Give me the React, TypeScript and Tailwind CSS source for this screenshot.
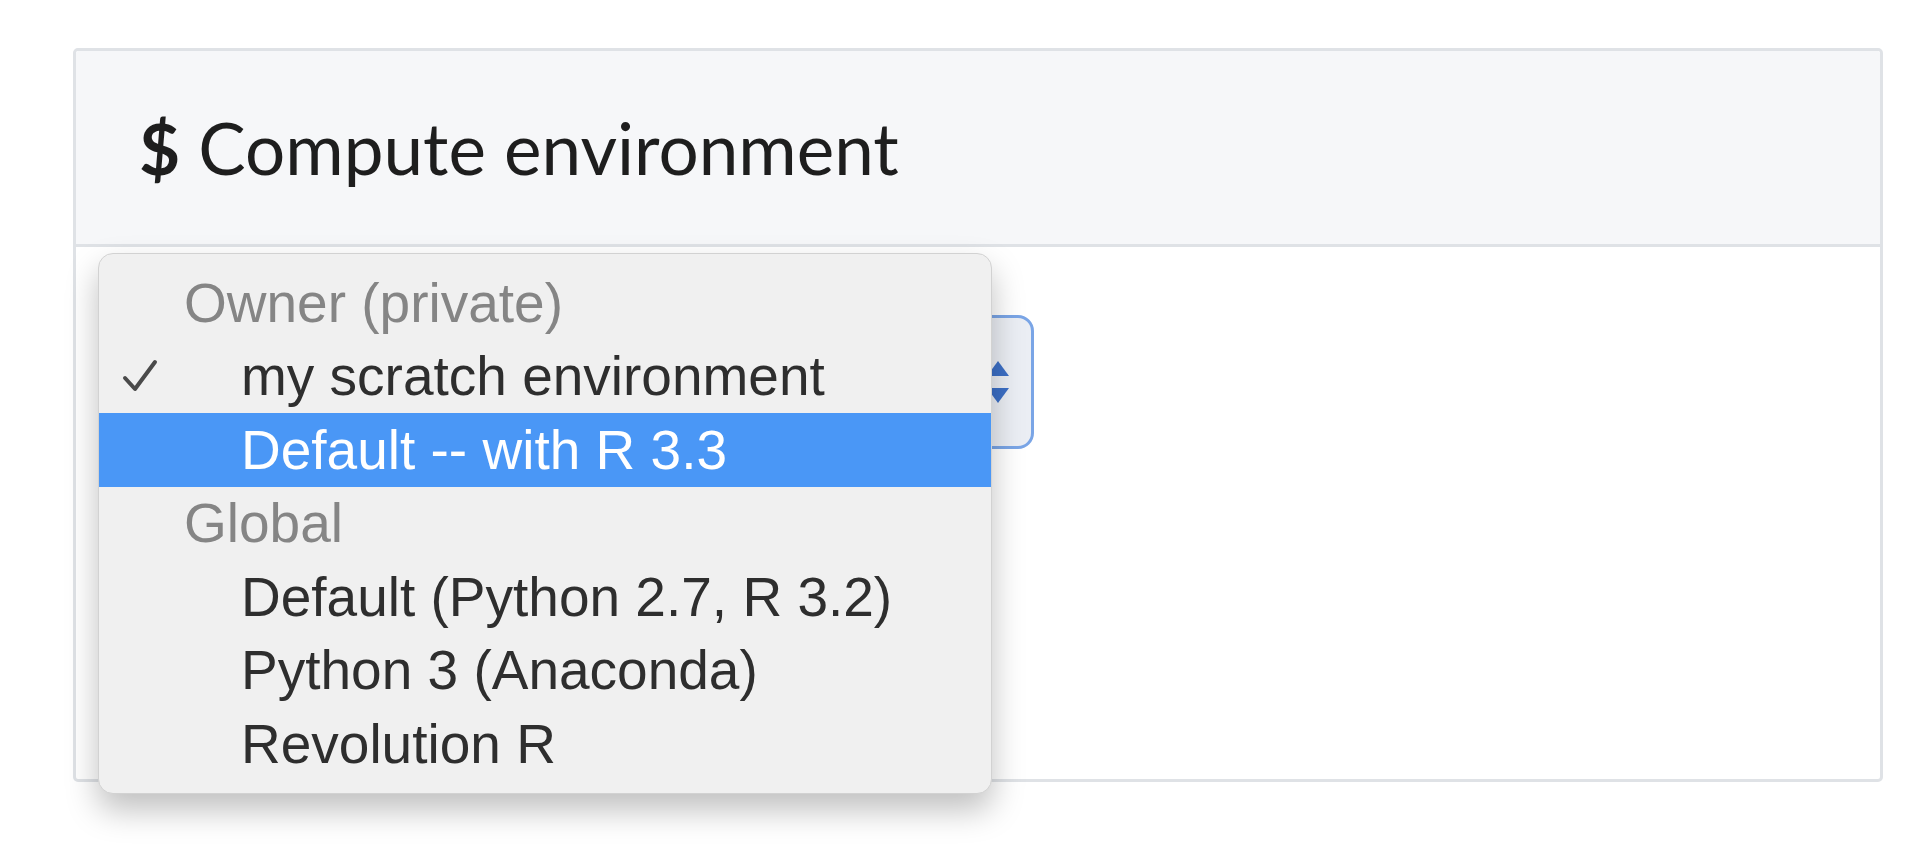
import React from 'react';

type Row =
    | { kind: 'group'; label: string }
    | { kind: 'item'; label: string; checked?: boolean; active?: boolean };

const rows: Row[] = [
    { kind: 'group', label: 'Owner (private)' },
    { kind: 'item', label: 'my scratch environment', checked: true },
    { kind: 'item', label: 'Default -- with R 3.3', active: true },
    { kind: 'group', label: 'Global' },
    { kind: 'item', label: 'Default (Python 2.7, R 3.2)' },
    { kind: 'item', label: 'Python 3 (Anaconda)' },
    { kind: 'item', label: 'Revolution R' },
];

function Check() {
    return (
        <svg width="40" height="36" viewBox="0 0 40 36" fill="none">
            <path d="M4 20 L14 31 L34 4" stroke="#4a4a4a" strokeWidth="4" strokeLinecap="round" strokeLinejoin="round" />
        </svg>
    );
}

export default function App() {
    return (
        <div className="min-h-screen bg-white pt-[48px] pl-[73px] pr-[37px]">
            <div className="relative h-[734px] rounded-[5px] border-[3px] border-[#dfe2e6] bg-white">
                {/* Header */}
                <div className="flex h-[196px] items-center border-b-[3px] border-[#dfe2e6] bg-[#f6f7f9] pl-[63px] rounded-t-[3px]">
                    <h2 className="font-['Lato',sans-serif] text-[71px] leading-none text-[#1e1e1e]">
                        <span className="font-bold">$</span> Compute environment
                    </h2>
                </div>

                {/* Body */}
                <div className="relative pt-[68px] pl-[54px]">
                    {/* focused select, mostly hidden by the open popup */}
                    <div className="flex h-[134px] w-[904px] items-center justify-end rounded-[16px] border-[3px] border-[#7aa5e6] bg-[#ebeef4] pr-[22px]">
                        <div className="flex flex-col items-center gap-[12px]">
                            <svg width="22" height="15" viewBox="0 0 22 15"><path d="M11 0 L22 15 L0 15 Z" fill="#3c6fc6" /></svg>
                            <svg width="22" height="15" viewBox="0 0 22 15"><path d="M0 0 L22 0 L11 15 Z" fill="#3c6fc6" /></svg>
                        </div>
                    </div>

                    {/* Native select popup */}
                    <div className="absolute left-[22px] top-[6px] w-[894px] rounded-[15px] border border-[#d2d2d2] bg-[#f0f0f0] py-[12px] shadow-[0_16px_32px_rgba(0,0,0,0.25)] font-['Liberation_Sans',sans-serif] text-[55px]">
                        {rows.map((row, i) =>
                            row.kind === 'group' ? (
                                <div key={i} className="flex h-[73.5px] items-center pl-[85px] text-[#858585]">
                                    {row.label}
                                </div>
                            ) : (
                                <div
                                    key={i}
                                    className={
                                        row.active
                                            ? 'flex h-[73.5px] items-center bg-[#4a97f6] text-white'
                                            : 'flex h-[73.5px] items-center text-[#2e2e2e]'
                                    }
                                >
                                    <span className="flex w-[142px] justify-start pl-[22px]">
                                        {row.checked && <Check />}
                                    </span>
                                    {row.label}
                                </div>
                            )
                        )}
                    </div>
                </div>
            </div>
        </div>
    );
}
